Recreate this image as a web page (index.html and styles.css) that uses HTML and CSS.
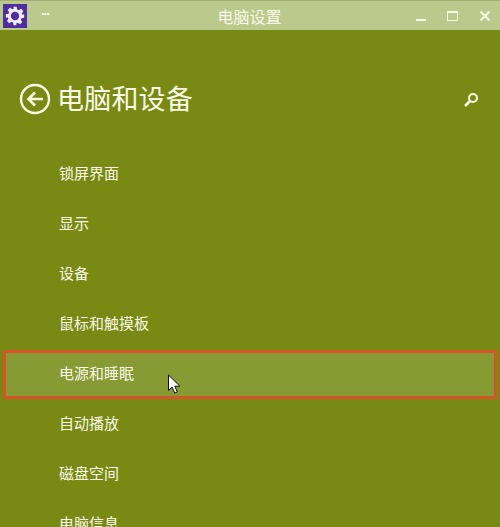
FILE: index.html
```html
<!DOCTYPE html>
<html lang="zh">
<head>
  <meta charset="UTF-8" />
  <meta name="viewport" content="width=device-width, initial-scale=1" />
  <title>电脑设置</title>
  <link rel="stylesheet" href="styles.css">
</head>
<body>
  <header class="titlebar">
    <div class="app-icon">
      <svg width="20" height="20" viewBox="0 0 24 24"><path fill="#f1ecfa" fill-rule="evenodd" d="M10 1h4l.6 3.2 1.9.8 2.7-1.8 2.8 2.8-1.8 2.7.8 1.9L23 10v4l-3.2.6-.8 1.9 1.8 2.7-2.8 2.8-2.7-1.8-1.9.8L13.700 23h-3.400l-.6-3.200-1.900-.8-2.700 1.800-2.800-2.800 1.800-2.700-.8-1.900L1 14v-4l3.200-.6.8-1.900-1.800-2.700 2.800-2.800 2.700 1.800 1.900-.8zM12 7a5 5 0 1 0 0 10 5 5 0 0 0 0-10z"/></svg>
    </div>
    <span class="dots">...</span>
    <span class="title">电脑设置</span>
    <div class="controls">
      <span class="ctl-min"></span>
      <span class="ctl-max"></span>
      <svg width="12" height="12" viewBox="0 0 12 12"><path stroke="#f6f8e4" stroke-width="2.200" d="M1.500 1.500l9 9M10.500 1.500l-9 9"/></svg>
    </div>
  </header>

  <main>
    <div class="page-head">
      <svg class="back" width="32" height="32" viewBox="0 0 32 32" fill="none" stroke="#f8f9e6"><circle cx="16" cy="16" r="14" stroke-width="2.400"/><path stroke-width="2.600" d="M24 16H10M16 9.500L9.500 16l6.500 6.500"/></svg>
      <h1>电脑和设备</h1>
      <svg class="search" width="16" height="16" viewBox="0 0 16 16" fill="none" stroke="#f8f9e0"><circle cx="10" cy="6" r="4" stroke-width="2"/><path stroke-width="2.600" d="M7 9l-5 5"/></svg>
    </div>

    <ul class="menu">
      <li>锁屏界面</li>
      <li>显示</li>
      <li>设备</li>
      <li>鼠标和触摸板</li>
      <li class="selected">电源和睡眠
        <svg class="cursor" width="14" height="21" viewBox="0 0 14 21"><path fill="#fff" stroke="#111" stroke-width="1" d="M1.500 1v15.500l3.700-3.400 2.500 6 2.600-1.100-2.500-5.800h5z"/></svg>
      </li>
      <li>自动播放</li>
      <li>磁盘空间</li>
      <li>电脑信息</li>
    </ul>
  </main>
</body>
</html>
```

FILE: styles.css
```css
body {
  margin: 0;
  height: 527px;
  overflow: hidden;
  background-color: #788a14;
  color: #f8f9e6;
  font-family: "Noto Sans CJK SC", "Liberation Sans", sans-serif;
}
.titlebar {
  height: 30px;
  box-sizing: border-box;
  border-top: 1px solid #a2ae75;
  background-color: #bcc98c;
  display: flex;
  align-items: center;
  position: relative;
}
.app-icon {
  width: 24px;
  height: 24px;
  margin: 1px 0 0 3px;
  background-color: #4e2f9c;
  display: flex;
  align-items: center;
  justify-content: center;
}
.dots {
  margin: -11px 0 0 14px;
  font-size: 11px;
  line-height: 12px;
  font-weight: 700;
  color: #fff;
  letter-spacing: -1px;
}
.title {
  position: absolute;
  left: -1px;
  right: 0;
  text-align: center;
  font-size: 16px;
  color: #f8f9ea;
}
.controls {
  margin-left: auto;
  display: flex;
  align-items: center;
  gap: 21px;
  padding-right: 9px;
}
.ctl-min {
  width: 10px;
  height: 2px;
  margin-top: 9px;
  background-color: #f6f8e4;
}
.ctl-max {
  width: 9px;
  height: 7px;
  border: 1px solid #f6f8e4;
  border-top-width: 2px;
}
.page-head {
  display: flex;
  align-items: center;
  height: 48px;
  margin-top: 45px;
  padding: 0 21px 0 19px;
}
h1 {
  margin: -4px 0 0 6px;
  font-size: 27px;
  font-weight: 400;
  letter-spacing: 0.2px;
}
.search {
  margin-left: auto;
  margin-top: 2px;
}
.menu {
  list-style: none;
  margin: 24px 0 0;
  padding: 0 3px;
}
.menu li {
  height: 50px;
  box-sizing: border-box;
  padding-left: 56px;
  display: flex;
  align-items: center;
  font-size: 15px;
  position: relative;
}
.menu li.selected {
  background-color: #889a34;
  outline: 3px solid #d9532a;
  outline-offset: -3px;
  height: 49px;
  margin: 3px 0 -2px;
  padding-bottom: 5px;
}
.cursor {
  position: absolute;
  left: 164px;
  top: 24px;
}
```
